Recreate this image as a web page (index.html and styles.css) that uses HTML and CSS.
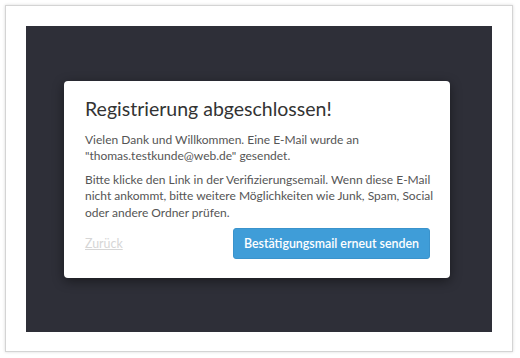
FILE: index.html
```html
<!DOCTYPE html>
<html lang="de">
<head>
    <meta charset="UTF-8">
    <meta name="viewport" content="width=device-width, initial-scale=1.0">
    <title>Registrierung abgeschlossen</title>
    <link rel="stylesheet" href="styles.css">
</head>
<body>

<div class="frame">
    <div class="stage">
        <div class="modal">
            <h2 class="modal-title">Registrierung abgeschlossen!</h2>
            <p>Vielen Dank und Willkommen. Eine E-Mail wurde an<br>"thomas.testkunde@web.de" gesendet.</p>
            <p>Bitte klicke den Link in der Verifizierungsemail. Wenn diese E-Mail<br>nicht ankommt, bitte weitere Möglichkeiten wie Junk, Spam, Social<br>oder andere Ordner prüfen.</p>
            <div class="modal-footer">
                <a href="#" class="back">Zurück</a>
                <button type="button" class="resend">Bestätigungsmail erneut senden</button>
            </div>
        </div>
    </div>
</div>

</body>
</html>
```

FILE: styles.css
```css
body {
    margin: 0;
    padding: 0;
    background: #fff;
    font-family: Lato, "Open Sans", sans-serif;
}
.frame {
    box-sizing: border-box;
    width: 508px;
    height: 347px;
    margin: 5px;
    padding: 20px;
    border: 1px solid #d4d4d4;
    box-shadow: 0 0 3px rgba(0,0,0,0.15);
    background: #fff;
}
.stage {
    height: 306px;
    display: flex;
    align-items: center;
    justify-content: center;
    padding-right: 4px; /* modal sits a little left of centre */
    background-color: #2e2f38;
}
.modal {
    box-sizing: border-box;
    width: 386px;
    height: 197px;
    padding: 16px 20px 18px 21px;
    background-color: #fff;
    border-radius: 4px;
    box-shadow: 0 3px 12px rgba(0,0,0,0.45);
}
.modal-title {
    margin: 0 0 11px;
    font-size: 19.5px;
    line-height: 24px;
    font-weight: 400;
    color: #333;
}
.modal p {
    margin: 0 0 7px;
    font-size: 12px;
    line-height: 16.5px;
    color: #555;
    white-space: nowrap;
}
.modal-footer {
    display: flex;
    align-items: center;
    justify-content: space-between;
}
.back {
    font-size: 12.4px;
    color: #d6d6d6;
    text-decoration: underline;
}
.resend {
    width: 197px;
    height: 31px;
    border: 1px solid #3a93cc;
    border-radius: 3px;
    background-color: #3f9dd8;
    color: #fff;
    font-family: inherit;
    font-size: 12.4px;
    font-weight: 600;
}
```
